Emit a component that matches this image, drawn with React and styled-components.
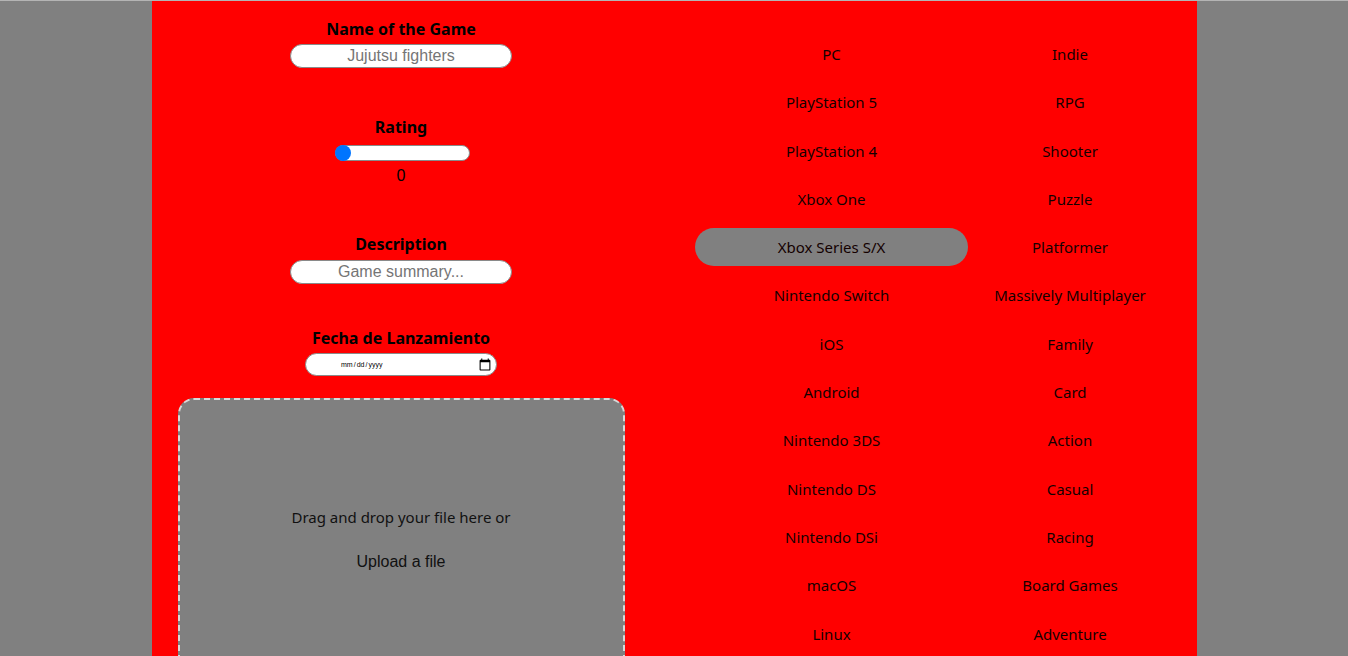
import React from "react";
import styled, { createGlobalStyle } from "styled-components";

const Global = createGlobalStyle`
  html, body { margin: 0; padding: 0; background: #808080; }
  body { font-family: "Noto Sans", sans-serif; }
  #root { min-height: 656px; }
`;

const Page = styled.div`
  height: 656px;
  overflow: hidden;
  background: #808080;
  border-top: 1px solid #b4b4b4;
  box-sizing: border-box;
  display: flex;
  justify-content: flex-start;
  padding-left: 152px;
`;

const Panel = styled.div`
  width: 1045px;
  background: #ff0000;
  display: flex;
  align-items: flex-start;
`;

const FormCol = styled.div`
  width: 498px;
  display: flex;
  flex-direction: column;
  align-items: center;
  padding-top: 17px;
`;

const Field = styled.div`
  display: flex;
  flex-direction: column;
  align-items: center;
  margin-bottom: ${(p) => p.$mb || 0}px;
`;

const Label = styled.label`
  font-family: "Noto Sans", sans-serif;
  font-weight: 700;
  font-size: 16px;
  line-height: 22px;
  color: #000;
  margin-bottom: ${(p) => p.$mb || 4}px;
`;

const TextInput = styled.input`
  width: 222px;
  height: 24px;
  box-sizing: border-box;
  border: 1px solid #8a8a8a;
  border-radius: 12px;
  background: #fff;
  text-align: center;
  font-family: "Liberation Sans", Arial, sans-serif;
  font-size: 16px;
  color: #757575;
  padding: 0 8px;
  outline: none;
  &::placeholder { color: #757575; }
`;

const Range = styled.input`
  -webkit-appearance: none;
  appearance: none;
  width: 135px;
  height: 16px;
  margin: 0 0 0 3px;
  background: #fff;
  border: 1px solid #8a8a8a;
  border-radius: 8px;
  box-sizing: border-box;
  outline: none;
  &::-webkit-slider-thumb {
    -webkit-appearance: none;
    width: 16px;
    height: 16px;
    border-radius: 50%;
    background: #0075ff;
    margin-left: -1px;
  }
`;

const RangeValue = styled.span`
  font-family: "Liberation Sans", Arial, sans-serif;
  font-size: 16px;
  line-height: 18px;
  margin-top: 6px;
  color: #000;
`;

const DateInput = styled.input`
  width: 192px;
  height: 23px;
  box-sizing: border-box;
  border: 1px solid #8a8a8a;
  border-radius: 12px;
  background: #fff;
  font-family: "Liberation Sans", Arial, sans-serif;
  font-size: 7px;
  color: #000;
  padding: 0 4px 0 34px;
  outline: none;
  &::-webkit-calendar-picker-indicator {
    width: 14px;
    height: 14px;
    margin: 0;
    padding: 0;
  }
`;

const DropZone = styled.div`
  margin-top: 22px;
  width: 447px;
  height: 280px;
  box-sizing: border-box;
  background: #808080;
  border: 2px dashed #d8d8d8;
  border-radius: 16px;
  display: flex;
  flex-direction: column;
  align-items: center;
  padding-top: 107px;
`;

const DropText = styled.p`
  margin: 0;
  font-family: "Noto Sans", sans-serif;
  font-size: 15px;
  line-height: 20px;
  color: #111;
`;

const UploadText = styled.span`
  margin-top: 25px;
  font-family: "Liberation Sans", Arial, sans-serif;
  font-size: 16px;
  line-height: 20px;
  color: #111;
`;

const Options = styled.div`
  margin-left: 45px;
  padding-top: 34px;
  display: grid;
  grid-template-columns: 273px 204px;
  row-gap: 10.3px;
`;

const Option = styled.div`
  height: 38px;
  border-radius: 19px;
  display: flex;
  align-items: center;
  justify-content: center;
  font-family: "Noto Sans", sans-serif;
  font-size: 15px;
  color: #140000;
  background: ${(p) => (p.$active ? "#808080" : "transparent")};
`;

const platforms = [
  "PC",
  "PlayStation 5",
  "PlayStation 4",
  "Xbox One",
  "Xbox Series S/X",
  "Nintendo Switch",
  "iOS",
  "Android",
  "Nintendo 3DS",
  "Nintendo DS",
  "Nintendo DSi",
  "macOS",
  "Linux",
];

const genres = [
  "Indie",
  "RPG",
  "Shooter",
  "Puzzle",
  "Platformer",
  "Massively Multiplayer",
  "Family",
  "Card",
  "Action",
  "Casual",
  "Racing",
  "Board Games",
  "Adventure",
];

export default function App() {
  return (
    <>
      <Global />
      <Page>
        <Panel>
          <FormCol>
            <Field $mb={48}>
              <Label>Name of the Game</Label>
              <TextInput placeholder="Jujutsu fighters" />
            </Field>
            <Field $mb={48}>
              <Label $mb={7}>Rating</Label>
              <Range type="range" min="0" max="10" defaultValue="0" />
              <RangeValue>0</RangeValue>
            </Field>
            <Field $mb={43}>
              <Label $mb={5}>Description</Label>
              <TextInput placeholder="Game summary..." />
            </Field>
            <Field>
              <Label>Fecha de Lanzamiento</Label>
              <DateInput type="date" />
            </Field>
            <DropZone>
              <DropText>Drag and drop your file here or</DropText>
              <UploadText>Upload a file</UploadText>
            </DropZone>
          </FormCol>
          <Options>
            {platforms.map((p, i) => (
              <React.Fragment key={p}>
                <Option $active={p === "Xbox Series S/X"}>{p}</Option>
                <Option>{genres[i]}</Option>
              </React.Fragment>
            ))}
          </Options>
        </Panel>
      </Page>
    </>
  );
}
